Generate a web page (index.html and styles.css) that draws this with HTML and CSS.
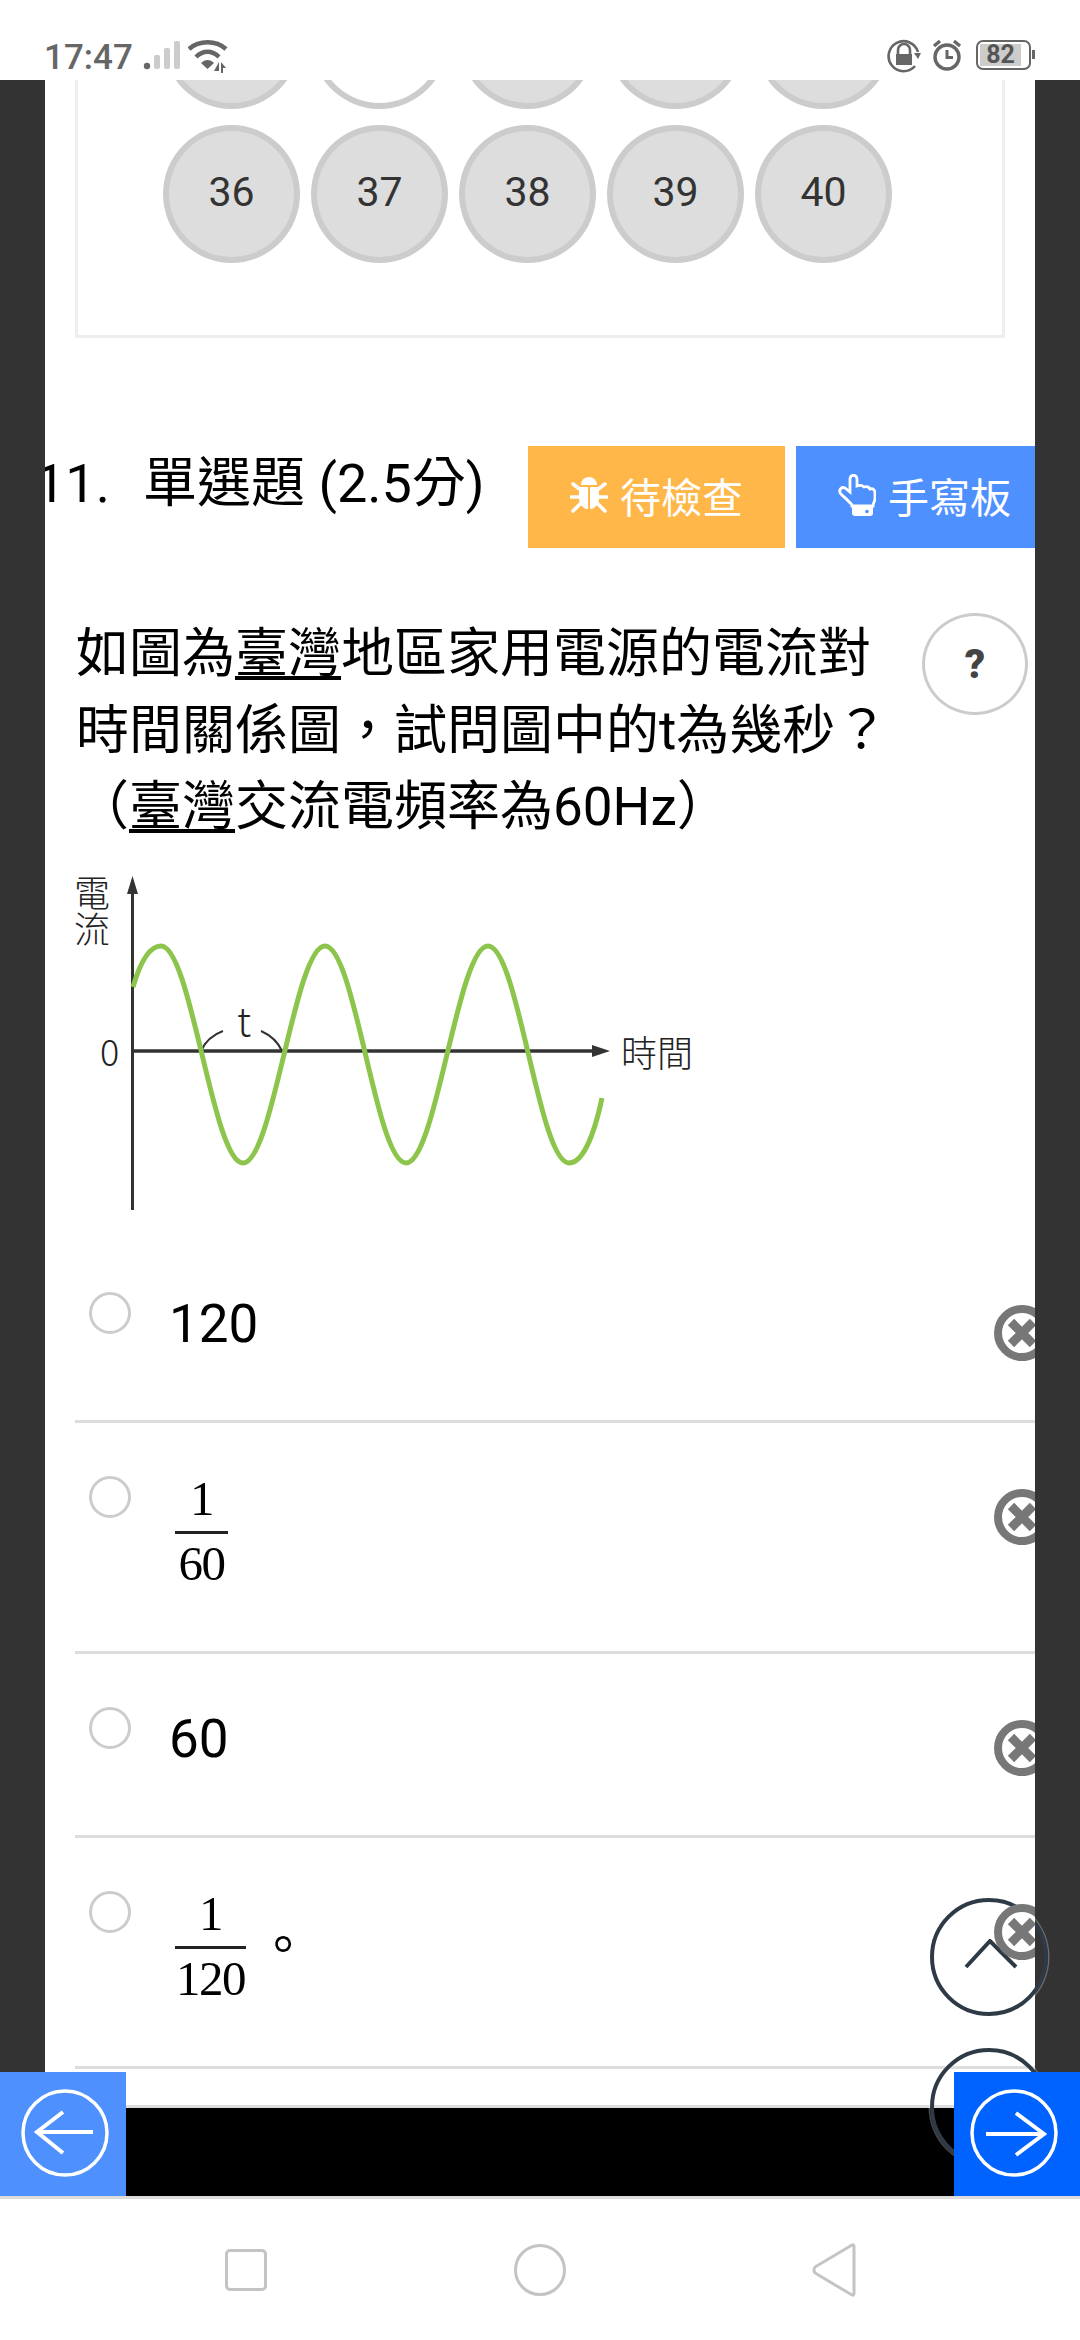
FILE: index.html
```html
<!DOCTYPE html>
<html lang="zh-Hant">
<head>
<meta charset="utf-8">
<title>單選題</title>
<link rel="stylesheet" href="styles.css">
</head>
<body>
<header class="status">
  <div class="status-left">
    <span class="clock">17:47</span>
    <svg class="signal" width="44" height="32" viewBox="0 0 44 32"><circle cx="4" cy="26" r="3.200" fill="#666"/><rect x="11" y="15" width="6" height="14" rx="2" fill="#ccc"/><rect x="21" y="8" width="6" height="21" rx="2" fill="#ccc"/><rect x="31" y="1" width="6" height="28" rx="2" fill="#ccc"/></svg>
    <svg class="wifi" width="46" height="34" viewBox="0 0 46 34"><g fill="none" stroke="#666" stroke-width="4.500"><path d="M1 9C11 0 28 0 38 9"/><path d="M8 17C15 10 24 10 31 17"/></g><path d="M13 23C17 19 22 19 26 23L19.500 29Z" fill="#666"/><path d="M26 31L31 22V31ZM33 33V22L38 28H35V33Z" fill="#666"/></svg>
  </div>
  <div class="status-right">
    <svg width="34" height="34" viewBox="0 0 34 34"><path d="M28 27A15 15 0 1 1 31 13" fill="none" stroke="#666" stroke-width="2.600"/><path d="M31 20L27 14H34Z" fill="#666"/><path d="M11 15V11A6 6 0 0 1 23 11V15" fill="none" stroke="#666" stroke-width="2.600"/><rect x="9" y="15" width="16" height="11" fill="#666"/></svg>
    <svg width="30" height="32" viewBox="0 0 30 32"><circle cx="15" cy="18" r="12" fill="none" stroke="#666" stroke-width="3.400"/><path d="M15 11V18.500H21" fill="none" stroke="#666" stroke-width="3"/><path d="M2 7L8 2M28 7L22 2" stroke="#666" stroke-width="3.400"/></svg>
    <div class="battery"><span class="battery-level">82</span></div>
    <span class="battery-nub"></span>
  </div>
</header>

<main class="sheet">
  <section class="answer-card">
    <div class="ball-grid">
      <span class="ball">31</span><span class="ball ball-open">32</span><span class="ball">33</span><span class="ball">34</span><span class="ball">35</span>
      <span class="ball">36</span><span class="ball">37</span><span class="ball">38</span><span class="ball">39</span><span class="ball">40</span>
    </div>
  </section>

  <div class="q-head">
    <h2 class="q-title"><span class="q-num">11.</span><span>單選題 (2.5分)</span></h2>
    <div class="q-actions">
      <button class="action action-check">
        <svg width="38" height="38" viewBox="0 0 38 38"><path d="M11 9A8 8 0 0 1 27 9Z" fill="#fff"/><path d="M9 11H18V33C13 33 9 28 9 22ZM20 11H29V22C29 28 25 33 20 33Z" fill="#fff"/><path d="M3 8L11 14M35 8L27 14M1 21H11M37 21H27M3 35L11 27M35 35L27 27" stroke="#fff" stroke-width="3.600" stroke-linecap="round"/></svg>
        <span>待檢查</span>
      </button>
      <button class="action action-board">
        <svg width="38" height="42" viewBox="0 0 38 42"><path d="M14 31C11 27 7 24 3 20C0 17 3 12 7 14L12 18V5C12 0 19 0 19 5V12C22 11 24 11 26 13C29 12 31 13 32 15C35 14 37 16 37 19V25C37 27 35 29 35 32H14Z" fill="none" stroke="#fff" stroke-width="2.800"/><path d="M14 33H35V39Q35 42 32 42H17Q14 42 14 39Z" fill="#fff"/><circle cx="29" cy="37.500" r="1.800" fill="#4f90ff"/></svg>
        <span>手寫板</span>
      </button>
    </div>
  </div>

  <div class="q-body">
    <p class="q-text">如圖為<u>臺灣</u>地區家用電源的電流對<br>時間關係圖，試問圖中的t為幾秒？<br>（<u>臺灣</u>交流電頻率為60Hz）</p>
    <button class="help">?</button>
  </div>

  <svg class="chart" width="630" height="345" viewBox="70 870 630 345">
    <g fill="none" stroke="#333">
      <path d="M132.500 884V1209" stroke-width="3"/>
      <path d="M132.500 1050H600" stroke-width="3.500"/>
      <path d="M201 1050C205 1041 212 1034 223 1030M261 1030C270 1034 278 1041 282 1050" stroke-width="2"/>
    </g>
    <path d="M132.500 875L127 893H138ZM610 1050L592 1044V1056Z" fill="#333"/>
    <path d="M133 986C140 962 149 945 161 945C191 945 213 1162 243 1162C273 1162 295 945 325 945C355 945 376 1162 406 1162C436 1162 458 945 488 945C518 945 539 1162 569 1162C584 1162 595 1130 602 1097" fill="none" stroke="#8cc44c" stroke-width="5"/>
    <g class="chart-label">
      <text x="92" y="874" class="chart-vert">電流</text>
      <text x="100" y="1065">0</text>
      <text x="237" y="1035" class="chart-t">t</text>
      <text x="621" y="1066">時間</text>
    </g>
  </svg>

  <ul class="options">
    <li class="option">
      <span class="radio"></span>
      <span class="opt-text">120</span>
      <svg class="remove" width="56" height="56" viewBox="0 0 56 56"><circle cx="28" cy="28" r="24" fill="#fff" stroke="#777" stroke-width="8"/><path d="M17 17L39 39M39 17L17 39" stroke="#777" stroke-width="9"/></svg>
    </li>
    <li class="option option-tall">
      <span class="radio"></span>
      <span class="frac"><span class="frac-num">1</span><span class="frac-den">60</span></span>
      <svg class="remove" width="56" height="56" viewBox="0 0 56 56"><circle cx="28" cy="28" r="24" fill="#fff" stroke="#777" stroke-width="8"/><path d="M17 17L39 39M39 17L17 39" stroke="#777" stroke-width="9"/></svg>
    </li>
    <li class="option">
      <span class="radio"></span>
      <span class="opt-text">60</span>
      <svg class="remove" width="56" height="56" viewBox="0 0 56 56"><circle cx="28" cy="28" r="24" fill="#fff" stroke="#777" stroke-width="8"/><path d="M17 17L39 39M39 17L17 39" stroke="#777" stroke-width="9"/></svg>
    </li>
    <li class="option option-tall">
      <span class="radio"></span>
      <span class="frac frac-wide"><span class="frac-num">1</span><span class="frac-den">120</span></span>
      <span class="opt-stop">。</span>
      <svg class="remove" width="56" height="56" viewBox="0 0 56 56"><circle cx="28" cy="28" r="24" fill="#fff" stroke="#777" stroke-width="8"/><path d="M17 17L39 39M39 17L17 39" stroke="#777" stroke-width="9"/></svg>
    </li>
  </ul>
</main>

<div class="float-btn float-up">
  <svg width="54" height="30" viewBox="0 0 54 30"><path d="M2 28L26 2L52 28" fill="none" stroke="#2e3a46" stroke-width="4"/></svg>
</div>
<div class="float-btn float-down"></div>

<footer class="pager">
  <button class="pager-btn pager-prev">
    <svg width="126" height="124" viewBox="0 0 126 124"><circle cx="65" cy="61" r="42" fill="none" stroke="#fff" stroke-width="3.500"/><path d="M93 60H37M63 40L37 60L63 81" fill="none" stroke="#fff" stroke-width="4"/></svg>
  </button>
  <button class="pager-btn pager-next">
    <svg width="126" height="124" viewBox="0 0 126 124"><circle cx="60" cy="61" r="42" fill="none" stroke="#fff" stroke-width="3.500"/><path d="M32 62H90M62 41L90 62L62 83" fill="none" stroke="#fff" stroke-width="4"/></svg>
  </button>
</footer>

<nav class="nav">
  <span class="nav-item"><span class="nav-square"></span></span>
  <span class="nav-item"><span class="nav-circle"></span></span>
  <span class="nav-item">
    <svg width="44" height="54" viewBox="0 0 44 54"><path d="M40 2Q42 1 42 4V50Q42 53 40 52L3 30Q1 27 3 24Z" fill="none" stroke="#c4c4c4" stroke-width="3"/></svg>
  </span>
</nav>
</body>
</html>
```

FILE: styles.css
```css
* { box-sizing: border-box; }

html, body { margin: 0; padding: 0; }

body {
  position: relative;
  width: 1080px;
  height: 2340px;
  overflow: hidden;
  background: #333;
  color: #000;
  font-family: Roboto, "Noto Sans CJK TC", sans-serif;
}

button {
  border: 0;
  padding: 0;
  font-family: inherit;
  cursor: pointer;
}

/* status bar */
.status {
  display: flex;
  justify-content: space-between;
  height: 80px;
  padding: 39px 45px 0 44px;
  background: #fff;
}

.status-left { display: flex; align-items: flex-start; }

.clock {
  margin-top: 3px;
  font-size: 35px;
  font-weight: 500;
  line-height: 32px;
  color: #666;
}

.signal { margin: 1px 0 0 10px; }
.wifi { margin: 1px 0 0 1px; }

.status-right { display: flex; align-items: flex-start; gap: 11px; }

.battery {
  width: 55px;
  height: 30px;
  margin: 1px 0 0 3px;
  padding: 2px;
  border: 2.5px solid #666;
  border-radius: 7px;
}

.battery-level {
  display: block;
  width: 41px;
  height: 22px;
  background: #ccc;
  color: #555;
  font-size: 25px;
  font-weight: 700;
  line-height: 22px;
  text-align: center;
}

.battery-nub {
  width: 3px;
  height: 9px;
  margin: 11px 0 0 -10px;
  background: #666;
}

/* white sheet */
.sheet {
  width: 990px;
  height: 2025px;
  margin: 0 45px;
  overflow: hidden;
  background: #fff;
}

.answer-card {
  width: 930px;
  margin: -109px 0 0 30px;
  padding: 0 0 72px 85px;
  border: 3px solid #eee;
  border-top: 0;
}

.ball-grid {
  display: grid;
  grid-template-columns: repeat(5, 137px);
  column-gap: 11px;
  row-gap: 16px;
}

.ball {
  display: flex;
  align-items: center;
  justify-content: center;
  height: 138px;
  padding-bottom: 4px;
  border: 6px solid #ccc;
  border-radius: 50%;
  background: #ddd;
  color: #333;
  font-size: 41px;
}

.ball-open { background: #fff; }

/* question header */
.q-head {
  display: flex;
  align-items: flex-start;
  justify-content: space-between;
  height: 102px;
  margin-top: 108px;
}

.q-title {
  display: flex;
  margin: 0 0 0 -10px;
  padding-top: 11px;
  font-size: 54px;
  font-weight: 400;
  line-height: 54px;
  white-space: nowrap;
}

.q-num { width: 108px; }

.q-actions { display: flex; gap: 11px; }

.action {
  display: flex;
  align-items: center;
  gap: 12px;
  height: 102px;
  padding: 0 0 4px 42px;
  color: #fff;
  font-size: 41px;
}

.action-check { width: 257px; background: #ffb74a; }
.action-board { width: 239px; background: #4f90ff; }

/* question body */
.q-body {
  display: flex;
  justify-content: space-between;
  align-items: flex-start;
  margin: 65px 7px 0 31px;
}

.q-text {
  margin: 3px 0 0;
  font-size: 53px;
  line-height: 76.500px;
  white-space: nowrap;
}

.q-text u { text-decoration-thickness: 3.500px; text-underline-offset: 4px; }

.help {
  flex: none;
  width: 106px;
  height: 102px;
  border: 3px solid #ccc;
  border-radius: 50%;
  background: #fff;
  color: #444;
  font-size: 40px;
  font-weight: 900;
}

.chart {
  display: block;
  margin: 25px 0 0 25px;
}

.chart-label {
  fill: #222;
  font-family: "Noto Sans CJK TC", sans-serif;
  font-size: 36px;
  font-weight: 300;
}

.chart-vert { writing-mode: vertical-rl; }

.chart-t { font-size: 40px; }

/* options */
.options {
  margin: 23px 0 0 30px;
  padding: 0;
  list-style: none;
}

.option {
  display: flex;
  align-items: flex-start;
  height: 184px;
  padding: 53px 0 0 14px;
  border-bottom: 3px solid #ddd;
}

.option-tall { height: 231px; }

.radio {
  flex: none;
  width: 42px;
  height: 42px;
  margin-right: 38px;
  border: 3px solid #ccc;
  border-radius: 50%;
  background: #fff;
}

.opt-text {
  margin-top: 6px;
  font-size: 53px;
  line-height: 52px;
}

.frac {
  display: flex;
  flex-direction: column;
  align-items: center;
  margin: -1px 0 0 6px;
  font-family: "Liberation Serif", serif;
  font-size: 49px;
  line-height: 48px;
  letter-spacing: -1.500px;
}

.frac-num { padding-bottom: 8px; }

.frac-den {
  width: 53px;
  padding-top: 6px;
  border-top: 3px solid #222;
  text-align: center;
}

.frac-wide .frac-den { width: 71px; }

.opt-stop {
  margin: 25px 0 0 11px;
  font-family: "Noto Sans CJK TC", sans-serif;
  font-size: 52px;
  line-height: 52px;
}

.remove {
  flex: none;
  position: relative;
  z-index: 3;
  margin: 13px -15px 0 auto;
}

/* floating round buttons */
.float-btn {
  position: absolute;
  z-index: 2;
  left: 930px;
  width: 118px;
  height: 118px;
  display: flex;
  align-items: center;
  justify-content: center;
  padding: 0 0 6px 3px;
  border: 4px solid #2e3a46;
  border-radius: 50%;
  box-shadow: 0 0 0 1.500px rgba(255, 255, 255, 0.28);
}

.float-up { top: 1898px; }
.float-down { top: 2048px; }

/* pager */
.pager {
  position: relative;
  height: 91px;
  border-top: 3px solid #ddd;
  background: #000;
}

.pager-btn {
  position: absolute;
  top: -36px;
  width: 126px;
  height: 124px;
  z-index: 4;
}

.pager-btn svg { display: block; }

.pager-prev { left: 0; background: #4f90ff; }
.pager-next { right: 0; background: #0062ff; }

/* system nav */
.nav {
  display: grid;
  grid-template-columns: repeat(3, 294px);
  justify-content: center;
  align-items: center;
  height: 144px;
  border-top: 3px solid #ddd;
  background: #fff;
}

.nav-item { display: flex; justify-content: center; }

.nav-square {
  width: 42px;
  height: 42px;
  border: 3px solid #c4c4c4;
  border-radius: 5px;
}

.nav-circle {
  width: 52px;
  height: 52px;
  border: 3px solid #c4c4c4;
  border-radius: 50%;
}
```
